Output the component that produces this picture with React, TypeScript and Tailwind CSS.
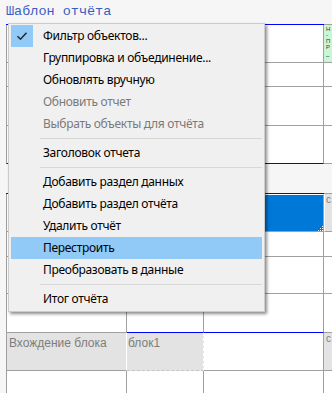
import React from "react";

const items: Array<{ t: string; dis?: boolean; chk?: boolean; hl?: boolean } | "sep"> = [
  { t: "Фильтр объектов...", chk: true },
  { t: "Группировка и объединение..." },
  { t: "Обновлять вручную" },
  { t: "Обновить отчет", dis: true },
  { t: "Выбрать объекты для отчёта", dis: true },
  "sep",
  { t: "Заголовок отчета" },
  "sep",
  { t: "Добавить раздел данных" },
  { t: "Добавить раздел отчёта" },
  { t: "Удалить отчёт" },
  { t: "Перестроить", hl: true },
  { t: "Преобразовать в данные" },
  "sep",
  { t: "Итог отчёта" },
];

function Menu() {
  return (
    <div
      className="absolute left-[8px] top-[23px] w-[257px] border border-[#cccccc] bg-[#f0f0f0] px-[2px] py-[1px] shadow-[2px_2px_3px_rgba(0,0,0,0.45)]"
      style={{ fontFamily: '"Noto Sans", "Open Sans", sans-serif' }}
    >
      {items.map((it, i) =>
        it === "sep" ? (
          <div key={i} className="h-[7px] pt-[3px] pl-[29px]">
            <div className="h-[1px] bg-[#d7d7d7]" />
          </div>
        ) : (
          <div
            key={i}
            className={
              "relative flex h-[22px] items-center pl-[32px] text-[12px] tracking-[-0.3px] " +
              (it.hl ? "bg-[#91c9f7] " : "") +
              (it.dis ? "text-[#7a7a7a]" : "text-black")
            }
          >
            {it.chk && (
              <div className="absolute left-0 top-0 flex h-[22px] w-[22px] items-center justify-center bg-[#91c9f7]">
                <svg width="12" height="10" viewBox="0 0 12 10">
                  <path d="M1.5 5.2 L4.5 8.2 L10.5 1.8" fill="none" stroke="#2b2b2b" strokeWidth="1.6" />
                </svg>
              </div>
            )}
            <span className="leading-[22px]">{it.t}</span>
          </div>
        )
      )}
    </div>
  );
}

const line = "border-[#a0a0a0]";

export default function App() {
  return (
    <div className="relative h-[393px] w-[332px] overflow-hidden bg-[#f6f6f6]">
      <div
        className="h-[24px] pl-[6px] pt-[4px] text-[13.5px] leading-[16px] text-[#3a5cc4]"
        style={{ fontFamily: '"Liberation Mono", "Courier New", monospace' }}
      >
        Шаблон отчёта
      </div>

      <div className="ml-[6px] flex flex-col" style={{ fontFamily: '"Liberation Sans", Arial, sans-serif' }}>
        {/* band 1 top line */}
        <div className="flex h-[1px]">
          <div className="w-[318px] bg-[#0000ff]" />
          <div className="flex-1 bg-[#a0a0a0]" />
        </div>
        <div className="flex h-[38px]">
          <div className={"w-[318px] border-x border-b bg-white " + line} />
          <div className={"flex-1 overflow-hidden border-b bg-[#c8f7d8] pl-[2px] pt-[1px] text-[6px] leading-[6px] text-[#6b1a1a] " + line}>
            <div>Н</div>
            <div>-</div>
            <div>П</div>
            <div>Р</div>
            <div className="pt-[3px] text-black">–</div>
          </div>
        </div>
        <div className="flex h-[24px]">
          <div className={"w-[318px] border-x border-b bg-white " + line} />
          <div className={"flex-1 border-b bg-white " + line} />
        </div>
        <div className="flex h-[39px]">
          <div className={"w-[318px] border-x border-b bg-white " + line} />
          <div className={"flex-1 border-b bg-white " + line} />
        </div>
        <div className="flex h-[38px]">
          <div className={"w-[318px] border-x border-b border-x-[#a0a0a0] border-b-[#0000ff] bg-white"} />
          <div className={"flex-1 border-b bg-white " + line} />
        </div>

        {/* gap */}
        <div className="h-[29px]" />

        {/* band 2 */}
        <div className="flex h-[1px]">
          <div className="w-[318px] bg-[#0000ff]" />
          <div className="flex-1 bg-[#a0a0a0]" />
        </div>
        <div className="flex h-[38px]">
          <div className={"w-[121px] border-x border-b bg-white " + line} />
          <div className={"w-[77px] border-r border-b bg-white " + line} />
          <div className={"relative w-[120px] border-r border-b border-t border-t-white bg-[#0078d7] " + line}>
            <svg className="absolute bottom-0 right-0" width="5" height="5" viewBox="0 0 5 5">
              <rect x="4" y="0" width="1" height="1" fill="#fff" />
              <rect x="2" y="2" width="1" height="1" fill="#fff" />
              <rect x="4" y="2" width="1" height="1" fill="#fff" />
              <rect x="0" y="4" width="1" height="1" fill="#fff" />
              <rect x="2" y="4" width="1" height="1" fill="#fff" />
              <rect x="4" y="4" width="1" height="1" fill="#fff" />
            </svg>
          </div>
          <div className={"flex-1 overflow-hidden whitespace-nowrap border-b border-l border-l-white bg-[#e3e3e3] pl-[1px] text-[10px] leading-[12px] text-[#808080] " + line}>
            с
          </div>
        </div>
        <div className="flex h-[25px]">
          <div className={"w-[121px] border-x border-b bg-white " + line} />
          <div className={"w-[77px] border-r border-b bg-white " + line} />
          <div className={"w-[120px] border-r border-b bg-white " + line} />
          <div className={"flex-1 border-b bg-white " + line} />
        </div>
        <div className="flex h-[37px]">
          <div className={"w-[121px] border-x border-b bg-white " + line} />
          <div className={"w-[77px] border-r border-b bg-white " + line} />
          <div className={"w-[120px] border-r border-b bg-white " + line} />
          <div className={"flex-1 border-b bg-white " + line} />
        </div>
        <div className="flex h-[39px]">
          <div className={"w-[121px] border-x border-b bg-white " + line} />
          <div className={"w-[77px] border-r border-b border-r-[#a0a0a0] border-b-[#0000ff] bg-white"} />
          <div className={"w-[120px] border-r border-b border-r-[#a0a0a0] border-b-[#0000ff] bg-white"} />
          <div className={"flex-1 border-b bg-white " + line} />
        </div>
        <div className="flex h-[38px]">
          <div className={"w-[121px] border-l border-r border-b border-r-white bg-[#e3e3e3] pl-[2px] pt-[3px] text-[12px] leading-[14px] text-[#7d7d7d] " + line}>
            Вхождение блока
          </div>
          <div className="w-[77px] border-b border-r border-dashed border-b-[#c4c4c4] border-r-white bg-[#e3e3e3] pl-[1px] pt-[3px] text-[12px] leading-[14px] text-[#7d7d7d]">
            блок1
          </div>
          <div className={"w-[120px] border-r border-b bg-white " + line} />
          <div className={"flex-1 overflow-hidden whitespace-nowrap border-b bg-[#e3e3e3] pl-[2px] text-[10px] leading-[12px] text-[#808080] " + line}>
            с
          </div>
        </div>
        <div className="flex h-[30px]">
          <div className={"w-[121px] border-x bg-white " + line} />
          <div className={"w-[77px] border-r bg-white " + line} />
          <div className={"w-[120px] border-r bg-white " + line} />
          <div className="flex-1 bg-white" />
        </div>
      </div>

      <Menu />
    </div>
  );
}
